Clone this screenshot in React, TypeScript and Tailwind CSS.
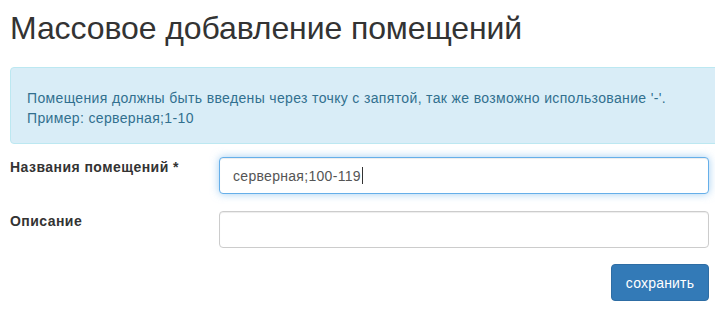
import React from "react";

export default function App() {
  return (
    <div className="w-full min-h-screen bg-white overflow-hidden font-['Liberation_Sans',Arial,sans-serif] text-[#333] text-[14px] leading-[20px]">
      <div className="pl-[10px] pr-[6px]">
        {/* Heading */}
        <h1 className="mt-[11px] text-[32px] leading-[35px] font-normal text-[#333] tracking-[-0.1px]">
          Массовое добавление помещений
        </h1>

        {/* Info alert */}
        <div className="mt-[21px] -mr-[30px] rounded-[4px] border border-[#bce8f1] bg-[#d9edf7] pl-[16px] pr-[15px] pt-[20px] pb-[15px] text-[#31708f] tracking-[0.35px]">
          <p>Помещения должны быть введены через точку с запятой, так же возможно использование '-'.</p>
          <p>Пример: серверная;1-10</p>
        </div>

        {/* Form */}
        <div className="mt-[13px] flex flex-col">
          <div className="flex items-start">
            <label className="w-[209px] shrink-0 font-bold tracking-[0.45px]">Названия помещений *</label>
            <div className="flex-1 h-[37px] flex items-center rounded-[4px] border border-[#66afe9] bg-white px-[13px] text-[#555] tracking-[0.3px] shadow-[inset_0_1px_1px_rgba(0,0,0,0.075),0_0_8px_rgba(102,175,233,0.6)]">
              <span>серверная;100-119</span>
              <span className="ml-[1px] w-px h-[17px] bg-[#333]" />
            </div>
          </div>

          <div className="mt-[17px] flex items-start">
            <label className="w-[209px] shrink-0 font-bold tracking-[0.45px]">Описание</label>
            <input
              type="text"
              readOnly
              className="flex-1 h-[37px] rounded-[4px] border border-[#ccc] bg-white px-[13px] text-[#555] outline-none shadow-[inset_0_1px_1px_rgba(0,0,0,0.075)]"
            />
          </div>

          <div className="mt-[16px] flex justify-end">
            <button className="w-[98px] h-[37px] rounded-[4px] border border-[#2e6da4] bg-[#337ab7] text-white text-[14px] tracking-[0.2px]">
              сохранить
            </button>
          </div>
        </div>
      </div>
    </div>
  );
}
